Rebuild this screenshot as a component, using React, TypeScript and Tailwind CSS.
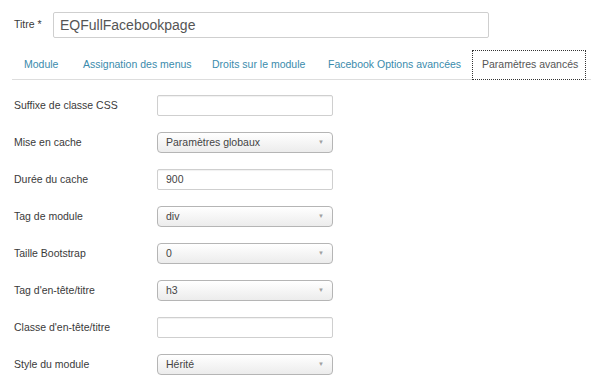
import React from "react";

const tabs = [
  { label: "Module", width: "w-[59px]", active: false },
  { label: "Assignation des menus", width: "w-[129px]", active: false },
  { label: "Droits sur le module", width: "w-[116px]", active: false },
  { label: "Facebook Options avancées", width: "w-[156px]", active: false },
  { label: "Paramètres avancés", width: "w-[114px]", active: true },
];

type Field = { label: string; kind: "input" | "select"; value?: string };

const fields: Field[] = [
  { label: "Suffixe de classe CSS", kind: "input" },
  { label: "Mise en cache", kind: "select", value: "Paramètres globaux" },
  { label: "Durée du cache", kind: "input", value: "900" },
  { label: "Tag de module", kind: "select", value: "div" },
  { label: "Taille Bootstrap", kind: "select", value: "0" },
  { label: "Tag d'en-tête/titre", kind: "select", value: "h3" },
  { label: "Classe d'en-tête/titre", kind: "input" },
  { label: "Style du module", kind: "select", value: "Hérité" },
];

function Control({ field }: { field: Field }) {
  if (field.kind === "select") {
    return (
      <div className="flex h-[21px] w-[176px] items-center justify-between rounded-[4px] border border-[#b5b5b5] bg-gradient-to-b from-white to-[#ececec] pl-[8px] pr-[8px] text-[10.5px] text-[#444]">
        <span>{field.value}</span>
        <span className="text-[6px] text-[#a0a0a0]">▼</span>
      </div>
    );
  }
  return (
    <div className="flex h-[21px] w-[176px] items-center rounded-[2px] border border-[#cfcfcf] bg-white pl-[8px] text-[10.5px] text-[#444] shadow-[inset_0_1px_1px_rgba(0,0,0,0.06)]">
      {field.value}
    </div>
  );
}

export default function App() {
  return (
    <div className="h-[391px] w-[591px] overflow-hidden bg-white font-['Liberation_Sans',Arial,sans-serif] text-[#3a3a3a]">
      <div className="flex items-center pt-[12px]">
        <span className="w-[53px] pl-[14px] text-[10.5px]">Titre *</span>
        <div className="flex h-[26px] w-[436px] items-center rounded-[2px] border border-[#cfcfcf] pl-[6px] text-[14px] text-[#555]">
          EQFullFacebookpage
        </div>
      </div>

      <div className="ml-[12px] mt-[12px] flex h-[30px] items-end border-b border-[#dddddd]">
        {tabs.map((tab) =>
          tab.active ? (
            <div
              key={tab.label}
              className={`-mb-px flex h-[30px] shrink-0 items-center whitespace-nowrap border border-dotted border-[#333] bg-white pl-[9px] text-[10.5px] text-[#555] ${tab.width}`}
            >
              {tab.label}
            </div>
          ) : (
            <div
              key={tab.label}
              className={`flex h-[29px] shrink-0 items-center whitespace-nowrap pl-[12px] text-[10.5px] text-[#3a8bac] ${tab.width}`}
            >
              {tab.label}
            </div>
          ),
        )}
      </div>

      <div className="mt-[15px] flex flex-col gap-[16px]">
        {fields.map((field) => (
          <div key={field.label} className="flex items-center">
            <span className="w-[157px] pl-[14px] text-[10.5px]">{field.label}</span>
            <Control field={field} />
          </div>
        ))}
      </div>
    </div>
  );
}
